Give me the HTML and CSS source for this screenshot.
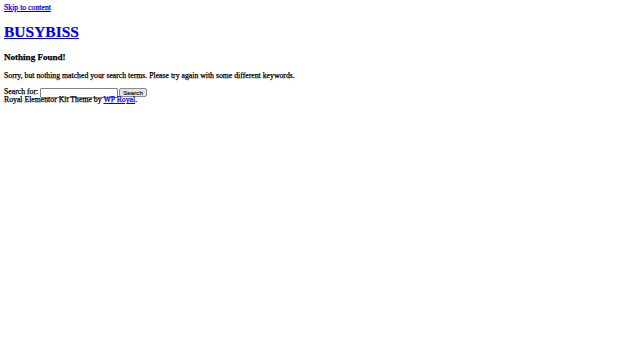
FILE: index.html
```html
<!DOCTYPE html>
<html lang="en">
<head>
<meta charset="utf-8">
<title>BUSYBISS</title>
<link rel="stylesheet" href="styles.css">
</head>
<body class="page">
<a class="skip-link" href="#content">Skip to content</a>
<header class="site-header">
  <h1 class="site-title"><a href="#">BUSYBISS</a></h1>
</header>
<main id="content" class="site-main">
  <h2 class="page-title">Nothing Found!</h2>
  <p class="notice">Sorry, but nothing matched your search terms. Please try again with some different keywords.</p>
  <form class="search-form" role="search">
    <label class="search-label" for="s">Search for:</label>
    <input class="search-field" type="text" id="s">
    <button class="search-submit" type="button">Search</button>
  </form>
</main>
<footer class="site-footer">Royal Elementor Kit Theme by <a href="#">WP Royal</a>.</footer>
</body>
</html>
```
FILE: styles.css
```css
html {
  background: #fff;
}
.page {
  margin: 3px 4px;
  font-family: "Liberation Serif", "Times New Roman", serif;
  font-size: 7.75px;
  line-height: 9px;
  color: #000;
  -webkit-text-stroke: 0.25px currentColor;
}
a {
  color: #0000ee;
}
.skip-link {
  display: inline-block;
}
.site-header {
  margin: 0;
}
.site-title {
  font-size: 15.5px;
  line-height: 18px;
  font-weight: bold;
  margin: 10.5px 0;
  -webkit-text-stroke: 0.2px currentColor;
}
.page-title {
  font-size: 9.06px;
  line-height: 10.5px;
  font-weight: bold;
  margin: 11.2px 0 8.7px;
}
.notice {
  margin: 8.7px 0 7px;
}
.search-form {
  display: flex;
  align-items: flex-start;
  height: 8.3px;
  margin: 0;
}
.search-label {
  line-height: 9px;
}
.search-field {
  box-sizing: border-box;
  width: 77.7px;
  height: 10px;
  margin: 0.8px 0 0 2px;
  padding: 0 1px;
  font-size: 6.45px;
  border: 1px solid #808080;
  border-radius: 1px;
  background: #fff;
  -webkit-text-stroke: 0;
}
.search-submit {
  box-sizing: border-box;
  width: 27.7px;
  height: 9.5px;
  margin: 1px 0 0 1.3px;
  padding: 0;
  font-family: "Liberation Sans", Arial, sans-serif;
  font-size: 6.2px;
  line-height: 7px;
  background: #e4e4e4;
  border: 1px solid #8a8a8a;
  border-radius: 2px;
  color: #222;
  -webkit-text-stroke: 0.2px currentColor;
}
.site-footer {
  margin: 0;
}
```
